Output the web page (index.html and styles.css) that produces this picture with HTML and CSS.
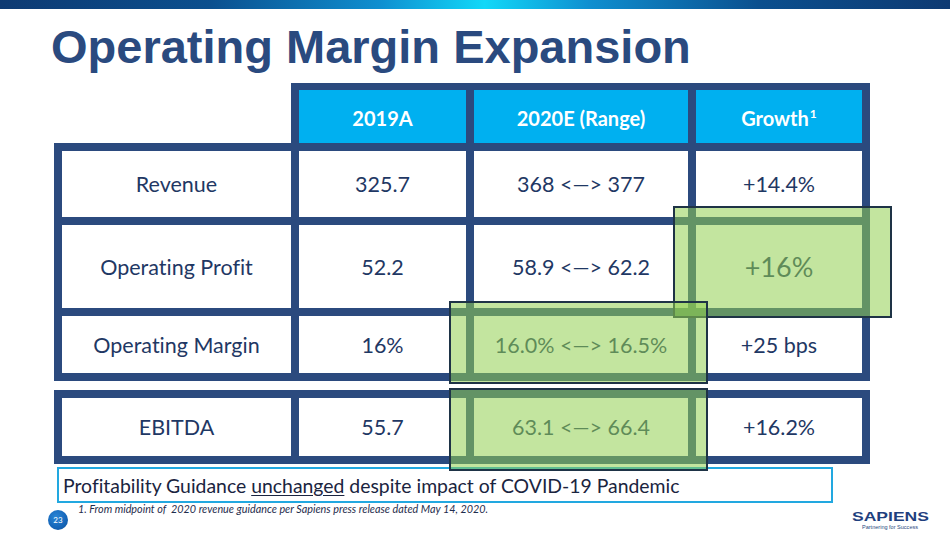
FILE: index.html
```html
<!DOCTYPE html>
<html lang="en">
<head>
<meta charset="utf-8">
<title>Operating Margin Expansion</title>
<link rel="stylesheet" href="styles.css">
</head>
<body>
<div class="slide">
  <div class="topbar"></div>
  <h1 class="title">Operating Margin Expansion</h1>
  <div class="table">
    <div class="thead">
      <div class="th">2019A</div>
      <div class="th">2020E (Range)</div>
      <div class="th"><span>Growth<sup>1</sup></span></div>
    </div>
    <div class="tbody main">
      <div class="td">Revenue</div>
      <div class="td">325.7</div>
      <div class="td">368 &lt;—&gt; 377</div>
      <div class="td">+14.4%</div>
      <div class="td">Operating Profit</div>
      <div class="td">52.2</div>
      <div class="td">58.9 &lt;—&gt; 62.2</div>
      <div class="td big">+16%</div>
      <div class="td">Operating Margin</div>
      <div class="td">16%</div>
      <div class="td">16.0% &lt;—&gt; 16.5%</div>
      <div class="td">+25 bps</div>
    </div>
    <div class="tbody ebitda">
      <div class="td">EBITDA</div>
      <div class="td">55.7</div>
      <div class="td">63.1 &lt;—&gt; 66.4</div>
      <div class="td">+16.2%</div>
    </div>
  </div>
  <div class="callout"><span>Profitability Guidance <u>unchanged</u> despite impact of COVID-19 Pandemic</span></div>
  <div class="footer">
    <div class="pagenum">23</div>
    <div class="footnote">1. From midpoint of&nbsp; 2020 revenue guidance per Sapiens press release dated May 14, 2020.</div>
    <svg class="logo" width="80" height="22" viewBox="0 0 80 22">
      <text x="1" y="11" class="logo-main" textLength="77" lengthAdjust="spacingAndGlyphs">SAPIENS</text>
      <text x="11" y="18.5" class="logo-tag" textLength="56" lengthAdjust="spacingAndGlyphs">Partnering for Success</text>
    </svg>
  </div>
  <div class="hl hl1"></div>
  <div class="hl hl2"></div>
  <div class="hl hl3"></div>
</div>
</body>
</html>
```

FILE: styles.css
```css
* { box-sizing: border-box; }
html, body { margin: 0; padding: 0; background: #ffffff; }
.slide {
  position: relative;
  width: 950px;
  height: 535px;
  overflow: hidden;
  background: #ffffff;
  font-family: Lato, "Open Sans", sans-serif;
  font-variant-ligatures: none;
  color: #1f3864;
}
.topbar {
  height: 9px;
  background: linear-gradient(90deg, #0e3a72 0%, #0b4f8e 22%, #0f8fd0 40%, #12d8f8 51%, #0f8fd0 62%, #0b4f8e 80%, #0e3a72 100%);
}
.title {
  margin: 14px 0 0 51px;
  font-family: "Liberation Sans", Arial, sans-serif;
  font-weight: bold;
  font-size: 47px;
  line-height: 47px;
  color: #2a4a7f;
}
.table {
  margin: 13px 0 0 54px;
  width: 816px;
}
.thead {
  margin-left: 237px;
  width: 579px;
  background: #2b4a7e;
  padding: 7px 8px 0 8px;
  display: grid;
  grid-template-columns: 167px 214px 166px;
  column-gap: 8px;
}
.th {
  height: 53px;
  background: #00b0f0;
  color: #ffffff;
  font-weight: bold;
  font-size: 20px;
  display: flex;
  align-items: center;
  justify-content: center;
  padding-top: 3px;
}
.th sup { font-size: 12px; line-height: 0; vertical-align: 8px; margin-left: 1px; }
.tbody {
  background: #2b4a7e;
  padding: 8px;
  display: grid;
  grid-template-columns: 229px 167px 214px 166px;
  column-gap: 8px;
  row-gap: 8px;
}
.main { grid-template-rows: 66px 83px 57px; }
.ebitda { margin-top: 9px; grid-template-rows: 58px; }
.td {
  background: #ffffff;
  display: flex;
  align-items: center;
  justify-content: center;
  font-size: 21.5px;
  color: #1f3864;
}
.td.big { font-size: 27px; }
.callout {
  margin: 3px 0 0 57px;
  width: 776px;
  height: 36px;
  border: 2px solid #22a8e0;
  padding: 0 0 0 4px;
  display: flex;
  align-items: center;
  font-size: 19.4px;
  color: #1a2440;
}
.callout u { text-underline-offset: 2px; text-decoration-thickness: 1px; }
.footer {
  display: flex;
  align-items: flex-start;
  height: 32px;
}
.pagenum {
  margin: 7px 0 0 48px;
  width: 20px;
  height: 20px;
  border-radius: 50%;
  background: radial-gradient(circle at 40% 35%, #2a86d6 0%, #1565b8 60%, #0e4f96 100%);
  color: #ffffff;
  font-size: 8px;
  display: flex;
  align-items: center;
  justify-content: center;
  flex: none;
}
.footnote {
  margin: 0 0 0 10px;
  font-size: 10.8px;
  line-height: 12px;
  font-style: italic;
  color: #1f2d4d;
}
.logo {
  margin: 7px 19px 0 auto;
  display: block;
  flex: none;
}
.logo-main {
  font-family: "Liberation Sans", Arial, sans-serif;
  font-weight: bold;
  font-size: 12.5px;
  fill: #1f3f7e;
}
.logo-tag {
  font-family: "Liberation Sans", Arial, sans-serif;
  font-size: 5.5px;
  fill: #2a4a80;
}
.hl {
  position: absolute;
  background: rgba(146, 208, 80, 0.55);
  border: 2px solid #1e3346;
}
.hl1 { left: 673px; top: 206px; width: 219px; height: 112px; }
.hl2 { left: 449px; top: 301px; width: 259px; height: 83px; }
.hl3 { left: 449px; top: 388px; width: 259px; height: 83px; }
```
